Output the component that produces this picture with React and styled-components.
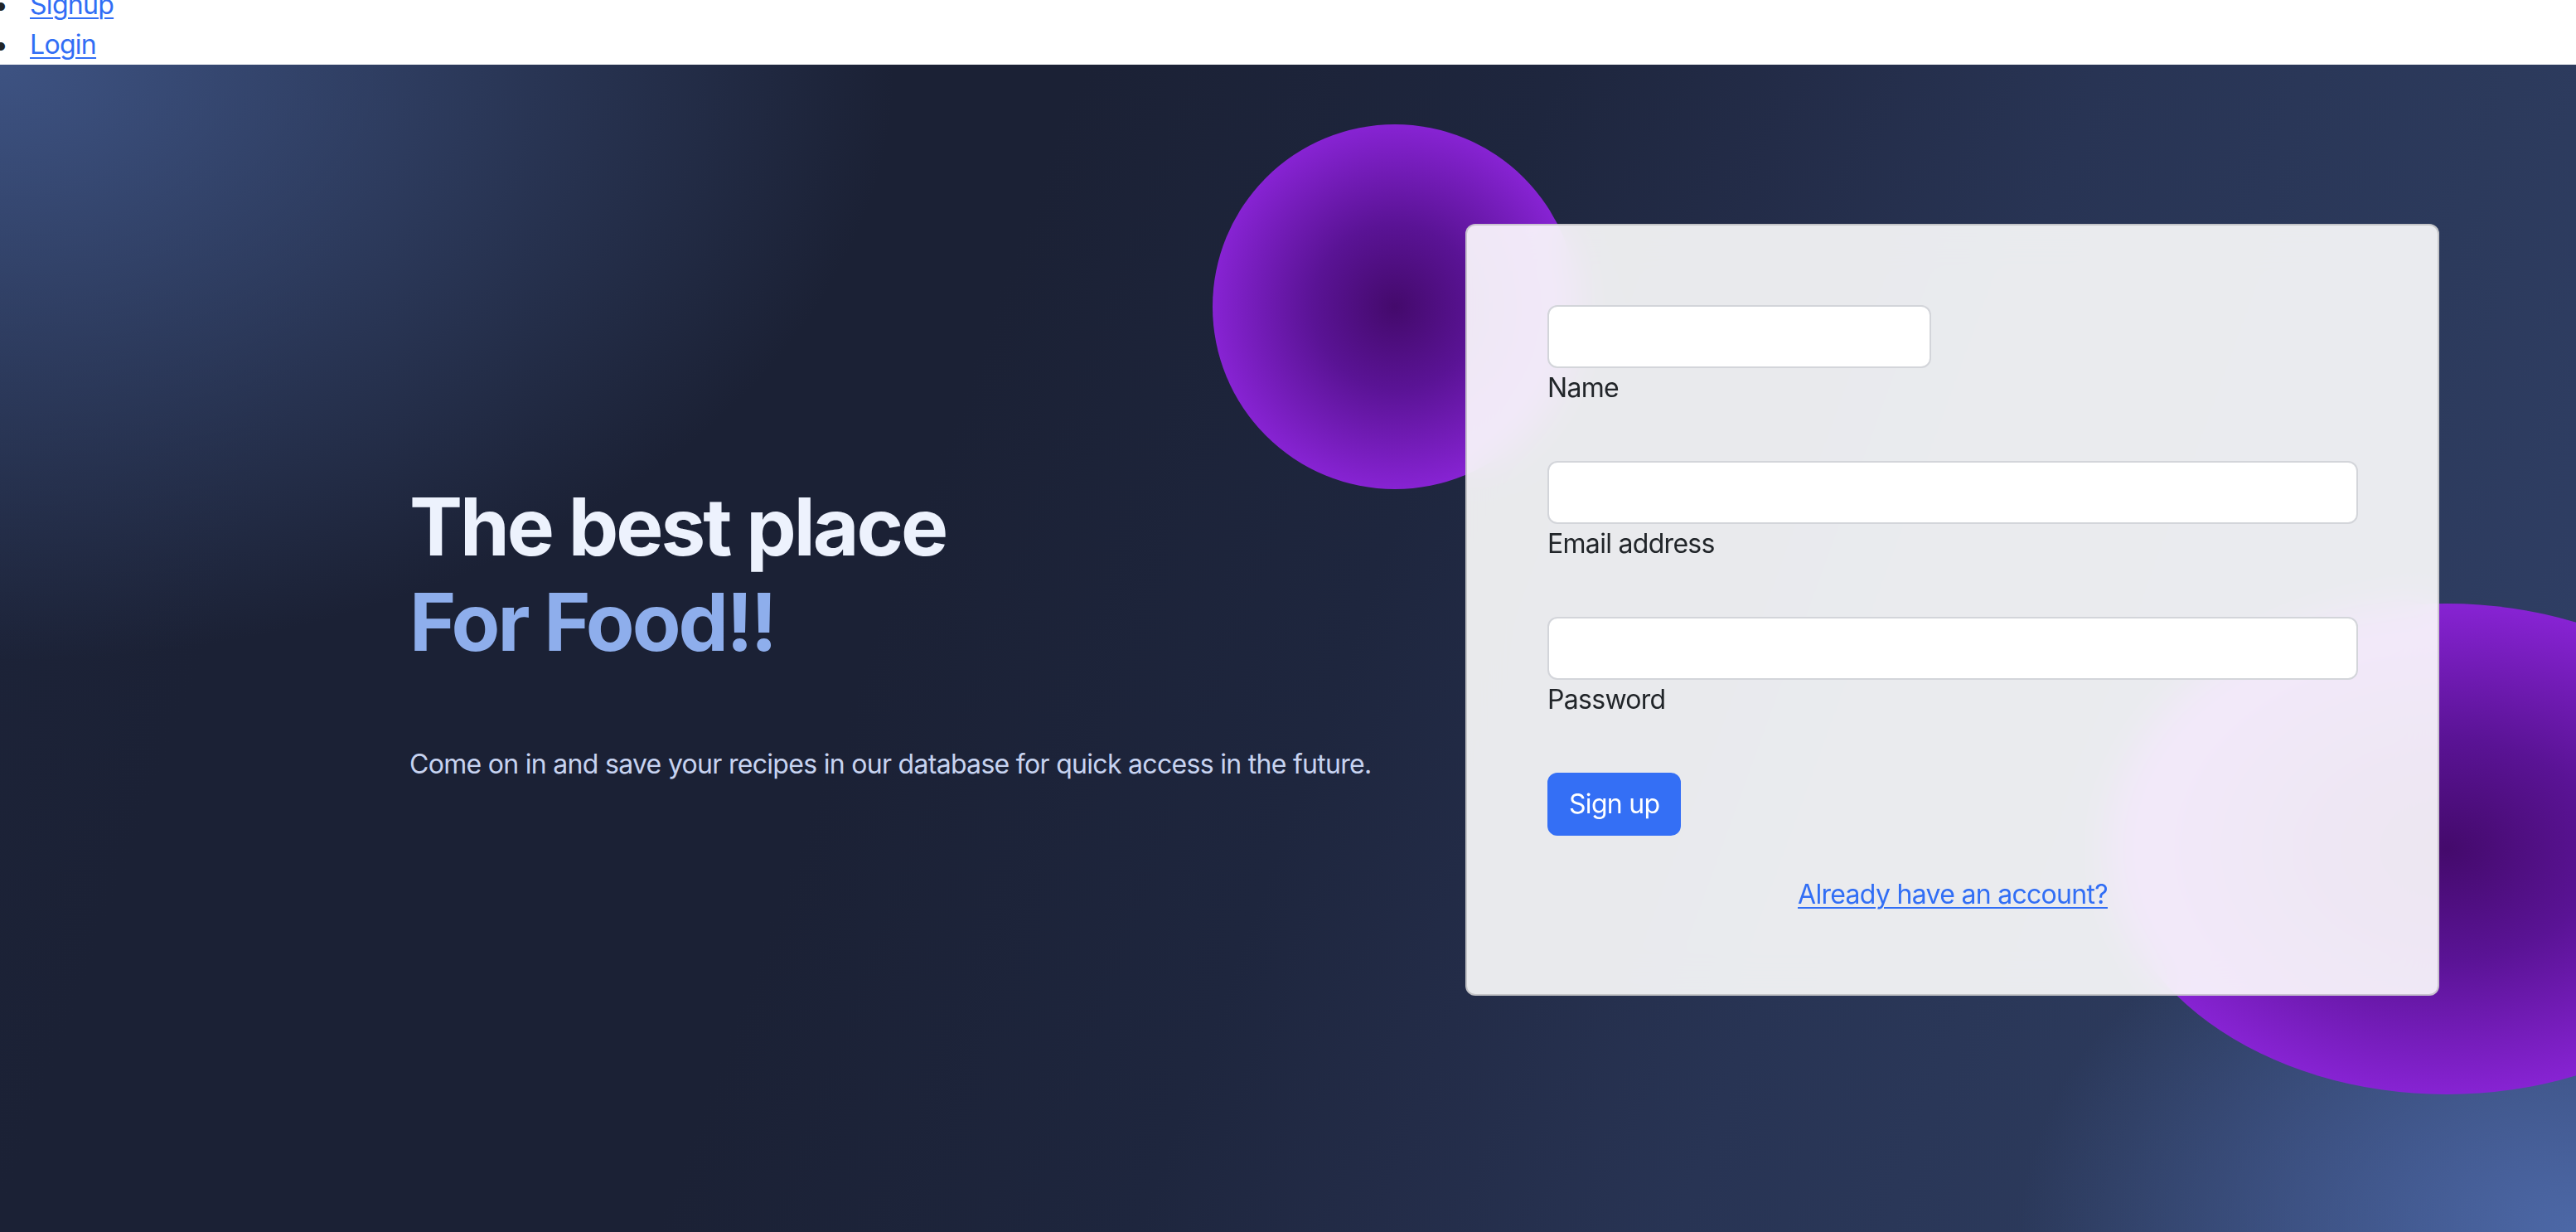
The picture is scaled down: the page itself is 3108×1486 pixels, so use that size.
import React from "react";
import styled, { createGlobalStyle } from "styled-components";

const NAVY_DARK = "#1b2135";
const BLUE_LINK = "#316ef5";
const PURPLE_EDGE = "#8723d3";
const PURPLE_MID = "#5a1395";
const PURPLE_CORE = "#440a6c";

const GlobalStyle = createGlobalStyle`
  html, body {
    margin: 0;
    padding: 0;
  }
  body {
    font-family: Inter, "Noto Sans", "Liberation Sans", sans-serif;
    letter-spacing: -0.7px;
    background: #ffffff;
    color: #212529;
    overflow: hidden;
  }
  * {
    box-sizing: border-box;
  }
`;

const NavList = styled.ul`
  margin: -18px 0 0 0;
  padding: 0 0 0 36px;
  list-style: none;
`;

const NavItem = styled.li`
  font-size: 32px;
  line-height: 48px;

  &::before {
    content: "•";
    display: inline-block;
    width: 0;
    margin-left: -44px;
    margin-right: 44px;
    color: #212529;
  }
`;

const NavLink = styled.a`
  color: ${BLUE_LINK};
  text-decoration: underline;
  text-underline-offset: 4px;
  text-decoration-thickness: 2px;
`;

const Hero = styled.section`
  position: relative;
  overflow: hidden;
  height: 1408px;
  display: flex;
  align-items: flex-start;
  padding: 192px 165px 0 494px;
  background:
    radial-gradient(ellipse 860px 600px at 100% 100%, rgba(78, 106, 170, 0.95), rgba(78, 106, 170, 0) 78%),
    radial-gradient(ellipse 1350px 900px at 0% 0%, rgba(63, 85, 134, 0.95), rgba(63, 85, 134, 0) 80%),
    linear-gradient(110deg, #1d243a 0%, ${NAVY_DARK} 14%, ${NAVY_DARK} 36%, #1e263e 52%, #232c48 60%, #283454 70%, #2c3a5c 84%, #31416a 100%);
`;

const Blob = styled.div`
  position: absolute;
  left: ${(p) => p.$left}px;
  top: ${(p) => p.$top}px;
  width: ${(p) => p.$w}px;
  height: ${(p) => p.$h}px;
  border-radius: 50%;
  background: radial-gradient(closest-side, ${PURPLE_CORE} 0%, ${PURPLE_MID} 45%, ${PURPLE_EDGE} 100%);
  z-index: 0;
`;

const TextColumn = styled.div`
  position: relative;
  z-index: 1;
  flex: 1;
  margin-top: 308px;
`;

const Title = styled.h1`
  margin: 0;
  font-size: 96px;
  line-height: 115px;
  font-weight: 700;
  letter-spacing: -3px;
`;

const TitleLine = styled.span`
  display: block;
  color: ${(p) => (p.$accent ? "#8eaeec" : "#edf2fd")};
`;

const Lead = styled.p`
  margin: 90px 0 0 0;
  font-size: 32px;
  line-height: 48px;
  color: #c7d3f0;
`;

const Card = styled.div`
  position: relative;
  z-index: 1;
  flex: none;
  width: 1175px;
  padding: 96px 96px 96px 97px;
  background: rgba(255, 255, 255, 0.9);
  backdrop-filter: blur(24px);
  -webkit-backdrop-filter: blur(24px);
  border: 2px solid rgba(0, 0, 0, 0.16);
  border-radius: 12px;
`;

const Form = styled.form`
  display: flex;
  flex-direction: column;
  align-items: flex-start;
`;

const Field = styled.div`
  display: flex;
  flex-direction: column;
  width: 100%;
  margin-bottom: 64px;
`;

const Input = styled.input`
  width: ${(p) => (p.$narrow ? "463px" : "100%")};
  height: 76px;
  padding: 12px 24px;
  font-family: inherit;
  font-size: 32px;
  background: #ffffff;
  border: 2px solid #d3d5da;
  border-radius: 12px;
  outline: none;
`;

const Label = styled.label`
  font-size: 32px;
  line-height: 48px;
  color: #212529;
`;

const SubmitButton = styled.button`
  height: 76px;
  padding: 12px 24px;
  font-family: inherit;
  font-size: 32px;
  line-height: 48px;
  letter-spacing: -0.7px;
  color: #ffffff;
  background: #346ff5;
  border: 2px solid #346ff5;
  border-radius: 12px;
  cursor: pointer;
`;

const Footer = styled.div`
  width: 100%;
  margin-top: 47px;
  text-align: center;
  font-size: 32px;
  line-height: 48px;
`;

const AccountLink = styled.a`
  color: ${BLUE_LINK};
  text-decoration: underline;
  text-underline-offset: 4px;
  text-decoration-thickness: 2px;
`;

function App() {
  return (
    <>
      <GlobalStyle />
      <nav>
        <NavList>
          <NavItem>
            <NavLink href="#signup">Signup</NavLink>
          </NavItem>
          <NavItem>
            <NavLink href="#login">Login</NavLink>
          </NavItem>
        </NavList>
      </nav>
      <Hero>
        <Blob $left={1463} $top={72} $w={440} $h={440} />
        <Blob $left={2546} $top={650} $w={812} $h={592} />
        <TextColumn>
          <Title>
            <TitleLine>The best place</TitleLine>
            <TitleLine $accent>For Food!!</TitleLine>
          </Title>
          <Lead>Come on in and save your recipes in our database for quick access in the future.</Lead>
        </TextColumn>
        <Card>
          <Form onSubmit={(e) => e.preventDefault()}>
            <Field>
              <Input id="name" type="text" $narrow />
              <Label htmlFor="name">Name</Label>
            </Field>
            <Field>
              <Input id="email" type="email" />
              <Label htmlFor="email">Email address</Label>
            </Field>
            <Field>
              <Input id="password" type="password" />
              <Label htmlFor="password">Password</Label>
            </Field>
            <SubmitButton type="submit">Sign up</SubmitButton>
            <Footer>
              <AccountLink href="#login">Already have an account?</AccountLink>
            </Footer>
          </Form>
        </Card>
      </Hero>
    </>
  );
}

export default App;
